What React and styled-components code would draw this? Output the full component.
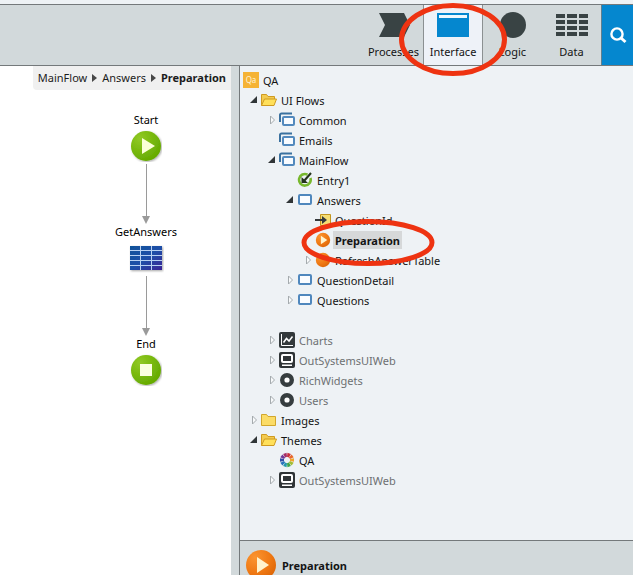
import React from "react"
import styled, { createGlobalStyle, css } from "styled-components"

const GlobalStyle = createGlobalStyle`
  * {
    box-sizing: border-box;
  }

  body {
    margin: 0;
    background-color: #eef2f5;
    color: #141414;
    font-family: "Noto Sans", "Open Sans", sans-serif;
    font-size: 11px;
    line-height: 16px;
  }

  button {
    font: inherit;
    color: inherit;
    background: none;
    border: 0;
    padding: 0;
    cursor: pointer;
  }

  svg {
    display: block;
    flex: none;
  }
`

const Page = styled.div`
  display: flex;
  flex-direction: column;
  height: 100vh;
  overflow: hidden;
`

const Toolbar = styled.header`
  display: flex;
  justify-content: flex-end;
  flex: none;
  height: 62px;
  margin-top: 4px;
  background-color: #d2d9db;
  border-top: 1px solid #74797b;
  border-bottom: 1px solid #74797b;
  position: relative;
  z-index: 2;
`

const Tabs = styled.nav`
  display: flex;
`

const Tab = styled.button`
  display: flex;
  flex-direction: column;
  align-items: center;
  justify-content: space-between;
  width: 59px;
  padding: 7px 0 5px;
  position: relative;

  ${props => props.$active && css`
    width: 60px;
    background-color: #eef2f8;
    border-left: 1px solid #8b9092;
    border-right: 1px solid #8b9092;
    z-index: 1;
  `}
`

const SearchButton = styled.button`
  display: flex;
  align-items: center;
  justify-content: center;
  width: 32px;
  background-color: #0587cf;
  border-left: 1px solid #5f7f90;
`

const Ring = styled.svg`
  position: absolute;
  left: 50%;
  transform: translateX(-50%);
  top: ${props => props.$top}px;
  overflow: visible;
  pointer-events: none;
  z-index: 3;
`

const Workspace = styled.main`
  display: grid;
  grid-template-columns: minmax(0, 231fr) 8px minmax(0, 394fr);
  flex: 1;
  min-height: 0;
`

const Canvas = styled.section`
  display: flex;
  flex-direction: column;
  background-color: #fff;
`

const Breadcrumb = styled.nav`
  display: flex;
  align-items: center;
  align-self: flex-end;
  gap: 5px;
  height: 24px;
  padding: 0 5px;
  background-color: #f0f0f0;
  border-bottom-left-radius: 4px;
`

const Crumb = styled.a`
  color: #1c1c1c;
  text-decoration: none;
  white-space: nowrap;
  font-weight: ${props => (props.$current ? 700 : 400)};
`

const Flow = styled.div`
  display: flex;
  flex-direction: column;
  align-items: center;
  padding: 22px 0 0 61px;
`

const FlowNode = styled.div`
  display: flex;
  flex-direction: column;
  align-items: center;
  gap: 2px;
  color: #000;
`

const Splitter = styled.div`
  background-color: #d2d9db;
`

const Panel = styled.aside`
  display: flex;
  flex-direction: column;
  min-height: 0;
  border-left: 1px solid #74797b;
`

const TreeArea = styled.div`
  flex: 1;
  padding: 4px 3px 0;
`

const Branch = styled.ul`
  list-style: none;
  margin: 0;
  padding: 0 0 0 ${props => (props.$nested ? 18 : 0)}px;
`

const Leaf = styled.li`
  margin-top: ${props => (props.$separated ? 20 : 0)}px;
`

const Row = styled.div`
  display: flex;
  align-items: center;
  height: 20px;
  color: ${props => (props.$muted ? "#6d7072" : "#141414")};
`

const Expander = styled.button`
  display: flex;
  align-items: center;
  justify-content: flex-end;
  width: 18px;
  height: 20px;
  padding-right: 3px;
`

const Blank = styled.span`
  width: 18px;
`

const Label = styled.button`
  margin-left: 2px;
  padding: 2px 2px 0;
  white-space: nowrap;
  position: relative;

  ${props => props.$selected && css`
    font-weight: 700;
    background-color: #d6d8d9;
  `}
`

const Details = styled.footer`
  display: flex;
  gap: 6px;
  flex: none;
  height: 35px;
  padding: 9px 6px 0;
  background-color: #d2d9db;
  border-top: 1px solid #74797b;
  overflow: hidden;
`

const DetailsTitle = styled.strong`
  padding-top: 8px;
`

const AnnotationRing = ({ width, height, top }) => (
  <Ring $top={top} width={width} height={height} aria-hidden="true">
    <ellipse
      cx={width / 2}
      cy={height / 2}
      rx={width / 2 - 2.5}
      ry={height / 2 - 2.5}
      fill="none"
      stroke="#ee3311"
      strokeWidth="5"
    />
  </Ring>
)

const ProcessesIcon = () => (
  <svg width="32" height="26">
    <path d="M1 1h25l6 12-6 12H1l6-12z" fill="#394344" />
  </svg>
)

const InterfaceIcon = () => (
  <svg width="32" height="26">
    <path d="M0 1h32v24H0z" fill="#0587cf" />
    <path d="M2 3h28v3H2z" fill="#eef9ff" />
  </svg>
)

const LogicIcon = () => (
  <svg width="26" height="26">
    <circle cx="13" cy="13" r="13" fill="#394344" />
  </svg>
)

const DataIcon = () => (
  <svg width="32" height="26" fill="#394344">
    {[2, 8, 14, 20].map(y => (
      <path key={y} d={`M0 ${y}h9v4H0zM11 ${y}h10v4H11zM23 ${y}h9v4h-9z`} />
    ))}
  </svg>
)

const SearchIcon = () => (
  <svg width="18" height="18" fill="none" stroke="#fff">
    <circle cx="8" cy="8" r="5.6" strokeWidth="2.4" />
    <path d="M12 12l4.5 4" strokeWidth="3" />
  </svg>
)

const StartIcon = () => (
  <svg width="32" height="32">
    <defs>
      <radialGradient id="green" cx="0.3" cy="0.25" r="0.9">
        <stop offset="0" stopColor="#91c926" />
        <stop offset="0.5" stopColor="#77b80c" />
        <stop offset="1" stopColor="#5fa500" />
      </radialGradient>
      <filter id="soft" x="-20%" y="-20%" width="150%" height="150%">
        <feDropShadow dx="1" dy="1" stdDeviation="1" floodColor="#000" floodOpacity="0.35" />
      </filter>
    </defs>
    <circle cx="16" cy="16" r="15" fill="url(#green)" filter="url(#soft)" />
    <path d="M12 8v16l13-8z" fill="#fbffd8" />
  </svg>
)

const EndIcon = () => (
  <svg width="32" height="32">
    <circle cx="16" cy="16" r="15" fill="url(#green)" filter="url(#soft)" />
    <path d="M10 10h12v12H10z" fill="#fbffe0" />
  </svg>
)

const QueryIcon = () => (
  <svg width="36" height="32">
    <defs>
      <linearGradient id="blue" x1="0" y1="0" x2="1" y2="1">
        <stop offset="0" stopColor="#0f5299" />
        <stop offset="0.5" stopColor="#1e50a8" />
        <stop offset="1" stopColor="#3b2496" />
      </linearGradient>
    </defs>
    <path d="M2 4h32v24H2z" fill="url(#blue)" filter="url(#soft)" />
    <path d="M2 8.5h32M2 13.5h32M2 18.5h32M2 23.5h32M12.5 4v24M23.5 4v24" stroke="#b9d2f2" />
  </svg>
)

const Arrow = () => (
  <svg width="10" height="62">
    <path d="M5.5 2v52" stroke="#9a9a9a" />
    <path d="M1 54h8L5 62z" fill="#9a9a9a" />
  </svg>
)

const CrumbArrow = () => (
  <svg width="5" height="8">
    <path d="M0 0l5 4-5 4z" fill="#484848" />
  </svg>
)

const PlayIcon = ({ size, plain }) => (
  <svg width={size} height={size} viewBox="0 0 30 30">
    <defs>
      <radialGradient id="orange" cx="0.3" cy="0.25" r="0.9">
        <stop offset="0" stopColor="#fb9430" />
        <stop offset="0.6" stopColor="#ee7712" />
        <stop offset="1" stopColor="#d86205" />
      </radialGradient>
    </defs>
    <circle cx="15" cy="15" r={size > 20 ? 15 : 13.5} fill="url(#orange)" />
    {!plain && <path d="M11 7v16l12-8z" fill="#fff3cd" />}
  </svg>
)

const ModuleIcon = () => (
  <svg width="16" height="16">
    <path d="M0 0h16v16H0z" fill="#f5b335" />
    <text x="8" y="11" fontSize="8" textAnchor="middle" fill="#fff3d6">Qa</text>
  </svg>
)

const FolderOpenIcon = () => (
  <svg width="16" height="16" stroke="#cf9a20" strokeLinejoin="round">
    <path d="M.5 13.5v-11h5l1.5 2h6.5v3" fill="#f3cb50" />
    <path d="M.5 13.5l3-6.500h12l-2.500 6.500z" fill="#ffe05a" />
  </svg>
)

const FolderIcon = () => (
  <svg width="16" height="16" stroke="#d2a72c" strokeLinejoin="round">
    <path d="M.5 13.5v-11h5l1.5 2h7.5v9z" fill="#fbdc67" />
  </svg>
)

const FlowIcon = () => (
  <svg width="16" height="16" fill="none">
    <path d="M1 10V3a1.5 1.5 0 0 1 1.5-1.5H13" stroke="#3a719f" strokeWidth="2" />
    <rect x="4" y="5" width="11" height="8" rx="1" fill="#f8fbff" stroke="#5289bd" strokeWidth="2" />
  </svg>
)

const ScreenIcon = () => (
  <svg width="16" height="16">
    <rect x="2" y="3" width="12" height="9" rx="1" fill="#fafcff" stroke="#4f87bd" strokeWidth="2" />
  </svg>
)

const EntryIcon = () => (
  <svg width="16" height="16" fill="none">
    <path d="M10.5 2.6A5.8 5.8 0 1 0 13.4 6" stroke="#78b82d" strokeWidth="2.6" />
    <path d="M14 1L7 9" stroke="#25331d" strokeWidth="2" />
    <path d="M4.5 5v6H11z" fill="#25331d" />
  </svg>
)

const ParameterIcon = () => (
  <svg width="16" height="16">
    <path d="M5.5 2.5h10v11h-10z" fill="#f5dd73" stroke="#c3951d" />
    <path d="M0 8h8" stroke="#35393b" strokeWidth="2" />
    <path d="M7 4l5 4-5 4z" fill="#35393b" />
  </svg>
)

const ChartIcon = () => (
  <svg width="16" height="16" fill="none" stroke="#fff">
    <rect width="16" height="16" rx="2" fill="#33393b" stroke="none" />
    <path d="M2.5 2v11.5H14" />
    <path d="M4.5 10.5l3-4 2.5 2.5 3.5-4.500" strokeWidth="1.5" />
  </svg>
)

const WebIcon = () => (
  <svg width="16" height="16">
    <rect width="16" height="16" rx="2" fill="#2f3436" />
    <rect x="2" y="2" width="12" height="9" rx="2" fill="#fff" />
    <rect x="4" y="4" width="8" height="5" fill="#2f3436" />
    <path d="M3 12.5h10V14H3z" fill="#fff" />
  </svg>
)

const WidgetIcon = () => (
  <svg width="16" height="16">
    <circle cx="8" cy="8" r="4.8" fill="#fff" stroke="#363d3f" strokeWidth="4.4" />
  </svg>
)

const themeColors = ["#c92f3c", "#e8682b", "#f1a52c", "#a4bd32", "#3fa548", "#2498a9", "#2874bd", "#334fa5", "#713b97", "#a52e66"]

const ThemeIcon = () => (
  <svg width="16" height="16">
    {themeColors.map((color, i) => (
      <path key={color} d="M6.2 1h3.6L9 5H7z" fill={color} transform={`rotate(${i * 36 + 18} 8 8)`} />
    ))}
  </svg>
)

const ExpandMark = ({ open }) => (
  <svg width="8" height="10">
    {open
      ? <path d="M7 1v7H0z" fill="#303537" />
      : <path d="M2.5 1v8l4-4z" fill="#f8fafb" stroke="#a5abae" />}
  </svg>
)

const tabs = [
  { name: "Processes", icon: <ProcessesIcon /> },
  { name: "Interface", icon: <InterfaceIcon />, active: true },
  { name: "Logic", icon: <LogicIcon /> },
  { name: "Data", icon: <DataIcon /> },
]

const tree = [
  {
    name: "UI Flows", icon: <FolderOpenIcon />, open: true, items: [
      { name: "Common", icon: <FlowIcon />, open: false },
      { name: "Emails", icon: <FlowIcon /> },
      {
        name: "MainFlow", icon: <FlowIcon />, open: true, items: [
          { name: "Entry1", icon: <EntryIcon /> },
          {
            name: "Answers", icon: <ScreenIcon />, open: true, items: [
              { name: "QuestionId", icon: <ParameterIcon /> },
              { name: "Preparation", icon: <PlayIcon size={16} />, selected: true },
              { name: "RefreshAnswerTable", icon: <PlayIcon size={16} plain />, open: false },
            ],
          },
          { name: "QuestionDetail", icon: <ScreenIcon />, open: false },
          { name: "Questions", icon: <ScreenIcon />, open: false },
        ],
      },
      { name: "Charts", icon: <ChartIcon />, open: false, muted: true, separated: true },
      { name: "OutSystemsUIWeb", icon: <WebIcon />, open: false, muted: true },
      { name: "RichWidgets", icon: <WidgetIcon />, open: false, muted: true },
      { name: "Users", icon: <WidgetIcon />, open: false, muted: true },
    ],
  },
  { name: "Images", icon: <FolderIcon />, open: false },
  {
    name: "Themes", icon: <FolderOpenIcon />, open: true, items: [
      { name: "QA", icon: <ThemeIcon /> },
      { name: "OutSystemsUIWeb", icon: <WebIcon />, open: false, muted: true },
    ],
  },
]

const TreeItem = ({ item }) => (
  <Leaf $separated={item.separated}>
    <Row $muted={item.muted}>
      {item.open === undefined ? <Blank /> : (
        <Expander aria-label={`Toggle ${item.name}`} aria-expanded={item.open}>
          <ExpandMark open={item.open} />
        </Expander>
      )}
      {item.icon}
      <Label $selected={item.selected}>
        {item.name}
        {item.selected && <AnnotationRing width={133} height={47} top={-12} />}
      </Label>
    </Row>
    {item.items && (
      <Branch $nested>
        {item.items.map(child => <TreeItem key={child.name} item={child} />)}
      </Branch>
    )}
  </Leaf>
)

const App = () => {
  return (
    <>
      <GlobalStyle />
      <Page>
        <Toolbar>
          <Tabs>
            {tabs.map(tab => (
              <Tab key={tab.name} $active={tab.active}>
                {tab.icon}
                {tab.name}
                {tab.active && <AnnotationRing width={108} height={73} top={-2} />}
              </Tab>
            ))}
          </Tabs>
          <SearchButton aria-label="Search">
            <SearchIcon />
          </SearchButton>
        </Toolbar>

        <Workspace>
          <Canvas>
            <Breadcrumb>
              <Crumb href="#mainflow">MainFlow</Crumb>
              <CrumbArrow />
              <Crumb href="#answers">Answers</Crumb>
              <CrumbArrow />
              <Crumb href="#preparation" $current>Preparation</Crumb>
            </Breadcrumb>
            <Flow>
              <FlowNode>Start<StartIcon /></FlowNode>
              <Arrow />
              <FlowNode>GetAnswers<QueryIcon /></FlowNode>
              <Arrow />
              <FlowNode>End<EndIcon /></FlowNode>
            </Flow>
          </Canvas>
          <Splitter />
          <Panel>
            <TreeArea>
              <Row>
                <ModuleIcon />
                <Label>QA</Label>
              </Row>
              <Branch>
                {tree.map(item => <TreeItem key={item.name} item={item} />)}
              </Branch>
            </TreeArea>
            <Details>
              <PlayIcon size={30} />
              <DetailsTitle>Preparation</DetailsTitle>
            </Details>
          </Panel>
        </Workspace>
      </Page>
    </>
  )
}

export default App
